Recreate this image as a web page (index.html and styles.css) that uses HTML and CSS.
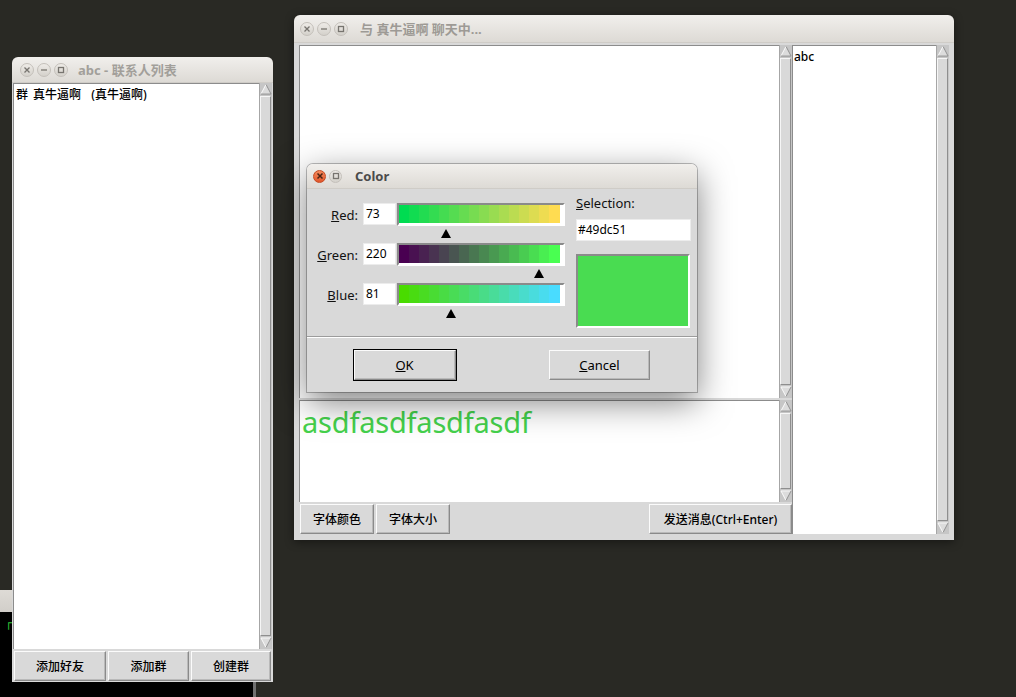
FILE: index.html
```html
<!DOCTYPE html>
<html lang="zh">
<head>
<meta charset="utf-8">
<title>chat</title>
<link rel="stylesheet" href="styles.css">
</head>
<body>
<div class="desktop">

  <div class="win terminal">
    <div class="term-title"></div>
    <div class="term-body">┌</div>
  </div>

  <div class="win contacts">
    <div class="titlebar">
      <div class="wbtns">
        <span class="wbtn"><svg viewBox="0 0 8 8"><path d="M1.5 1.5L6.5 6.5M6.5 1.5L1.5 6.5"/></svg></span>
        <span class="wbtn"><svg viewBox="0 0 8 8"><path d="M1 4H7"/></svg></span>
        <span class="wbtn"><svg viewBox="0 0 8 8"><rect x="1.5" y="1.5" width="5" height="5"/></svg></span>
      </div>
      <span class="wtitle">abc - 联系人列表</span>
    </div>
    <div class="wbody contacts-body">
      <div class="listrow">
        <div class="listbox">群 真牛逼啊  (真牛逼啊)</div>
        <div class="sb">
          <svg class="arr" viewBox="0 0 13 13"><polygon class="af" points="6.5,1.5 12,12 1,12"/><path class="al" d="M1 12L6.5 1.5"/><path class="ad" d="M6.5 1.5L12 12H1"/></svg>
          <div class="thumb"></div>
          <svg class="arr" viewBox="0 0 13 13"><polygon class="af" points="1,1 12,1 6.5,11.5"/><path class="al" d="M1 1H12M1 1L6.5 11.5"/><path class="ad" d="M12 1L6.5 11.5"/></svg>
        </div>
      </div>
      <div class="btnrow">
        <button class="tkbtn w92">添加好友</button>
        <button class="tkbtn w81">添加群</button>
        <button class="tkbtn grow">创建群</button>
      </div>
    </div>
  </div>

  <div class="win chat">
    <div class="titlebar">
      <div class="wbtns">
        <span class="wbtn"><svg viewBox="0 0 8 8"><path d="M1.5 1.5L6.5 6.5M6.5 1.5L1.5 6.5"/></svg></span>
        <span class="wbtn"><svg viewBox="0 0 8 8"><path d="M1 4H7"/></svg></span>
        <span class="wbtn"><svg viewBox="0 0 8 8"><rect x="1.5" y="1.5" width="5" height="5"/></svg></span>
      </div>
      <span class="wtitle">与 真牛逼啊 聊天中...</span>
    </div>
    <div class="wbody chat-body">
      <div class="chat-left">
        <div class="msgrow">
          <div class="textarea"></div>
          <div class="sb">
            <svg class="arr" viewBox="0 0 13 13"><polygon class="af" points="6.5,1.5 12,12 1,12"/><path class="al" d="M1 12L6.5 1.5"/><path class="ad" d="M6.5 1.5L12 12H1"/></svg>
            <div class="thumb"></div>
            <svg class="arr" viewBox="0 0 13 13"><polygon class="af" points="1,1 12,1 6.5,11.5"/><path class="al" d="M1 1H12M1 1L6.5 11.5"/><path class="ad" d="M12 1L6.5 11.5"/></svg>
          </div>
        </div>
        <div class="inputrow">
          <div class="textarea input">asdfasdfasdfasdf</div>
          <div class="sb">
            <svg class="arr" viewBox="0 0 13 13"><polygon class="af" points="6.5,1.5 12,12 1,12"/><path class="al" d="M1 12L6.5 1.5"/><path class="ad" d="M6.5 1.5L12 12H1"/></svg>
            <div class="thumb"></div>
            <svg class="arr" viewBox="0 0 13 13"><polygon class="af" points="1,1 12,1 6.5,11.5"/><path class="al" d="M1 1H12M1 1L6.5 11.5"/><path class="ad" d="M12 1L6.5 11.5"/></svg>
          </div>
        </div>
        <div class="chat-btns">
          <button class="tkbtn w74">字体颜色</button>
          <button class="tkbtn w74">字体大小</button>
          <button class="tkbtn send">发送消息(Ctrl+Enter)</button>
        </div>
      </div>
      <div class="chat-right">
        <div class="listbox">abc</div>
        <div class="sb">
          <svg class="arr" viewBox="0 0 13 13"><polygon class="af" points="6.5,1.5 12,12 1,12"/><path class="al" d="M1 12L6.5 1.5"/><path class="ad" d="M6.5 1.5L12 12H1"/></svg>
          <div class="thumb"></div>
          <svg class="arr" viewBox="0 0 13 13"><polygon class="af" points="1,1 12,1 6.5,11.5"/><path class="al" d="M1 1H12M1 1L6.5 11.5"/><path class="ad" d="M12 1L6.5 11.5"/></svg>
        </div>
      </div>
    </div>
  </div>

  <div class="win dialog">
    <div class="titlebar">
      <div class="wbtns">
        <span class="wbtn close"><svg viewBox="0 0 8 8"><path d="M1.5 1.5L6.5 6.5M6.5 1.5L1.5 6.5"/></svg></span>
        <span class="wbtn"><svg viewBox="0 0 8 8"><rect x="1.5" y="1.5" width="5" height="5"/></svg></span>
      </div>
      <span class="wtitle">Color</span>
    </div>
    <div class="wbody dlg-body">
      <div class="dlg-top">
        <div class="sliders">
          <div class="crow">
            <span class="clabel"><u>R</u>ed:</span>
            <div class="centry">73</div>
            <div class="cbarbox">
              <div class="cbar"><div class="grad g-red"></div></div>
              <div class="track"><span class="tri" style="margin-left:44px"></span></div>
            </div>
          </div>
          <div class="crow">
            <span class="clabel"><u>G</u>reen:</span>
            <div class="centry">220</div>
            <div class="cbarbox">
              <div class="cbar"><div class="grad g-green"></div></div>
              <div class="track"><span class="tri" style="margin-left:137px"></span></div>
            </div>
          </div>
          <div class="crow">
            <span class="clabel"><u>B</u>lue:</span>
            <div class="centry">81</div>
            <div class="cbarbox">
              <div class="cbar"><div class="grad g-blue"></div></div>
              <div class="track"><span class="tri" style="margin-left:49px"></span></div>
            </div>
          </div>
        </div>
        <div class="selcol">
          <span class="sellabel"><u>S</u>election:</span>
          <div class="centry selentry">#49dc51</div>
          <div class="swatch"></div>
        </div>
      </div>
      <div class="dlg-bottom">
        <div class="focusring"><button class="tkbtn okbtn"><u>O</u>K</button></div>
        <button class="tkbtn cancelbtn"><u>C</u>ancel</button>
      </div>
    </div>
  </div>

</div>
</body>
</html>
```

FILE: styles.css
```css
* { box-sizing: border-box; }
html, body { margin: 0; padding: 0; }
body {
  width: 1016px;
  height: 697px;
  overflow: hidden;
  background: #292924;
  font-family: "Noto Sans", "Noto Sans CJK SC", sans-serif;
  font-size: 12px;
  color: #000;
}
.desktop { position: relative; width: 1016px; height: 697px; }

.win { position: absolute; display: flex; flex-direction: column; }

/* background terminal */
.terminal { left: -20px; top: 590px; width: 276px; height: 107px; }
.term-title { height: 22px; background: linear-gradient(#dedbd6, #d1cec9); }
.term-body {
  flex: 1;
  background: #000;
  border-right: 3px solid #707070;
  padding: 5px 0 0 25px;
  color: #2fc238;
  font: bold 12px/1 "DejaVu Sans Mono", monospace;
}

/* title bars */
.titlebar {
  flex: none;
  display: flex;
  align-items: center;
  border-radius: 6px 6px 0 0;
  background: linear-gradient(#f1efec, #dddad5);
  border-bottom: 1px solid #cfccc7;
}
.wbtns { display: flex; gap: 3px; }
.wbtn {
  width: 14px;
  height: 14px;
  border-radius: 50%;
  background: linear-gradient(#eeebe7, #d4d1cb);
  border: 1px solid #c4c0ba;
  display: flex;
  align-items: center;
  justify-content: center;
}
.wbtn svg { width: 8px; height: 8px; fill: none; stroke: #77746f; stroke-width: 1.3; }
.wbtn.close {
  background: linear-gradient(#f58a5c, #e2562b);
  border-color: #c44a22;
}
.wbtn.close svg { stroke: #4a2413; stroke-width: 1.5; }
.wtitle {
  font-size: 13px;
  font-weight: bold;
  color: #a29f9a;
  white-space: pre;
}

.wbody { flex: 1; background: #d9d9d9; display: flex; min-height: 0; }

/* contacts window */
.contacts { left: 12px; top: 57px; width: 261px; height: 625px; }
.contacts .titlebar { height: 26px; padding-left: 8px; }
.contacts .wtitle { margin-left: 10px; }
.contacts-body { flex-direction: column; padding: 0 1px 1px 1px; gap: 2px; }
.listrow { flex: 1; display: flex; min-height: 0; }
.listbox {
  flex: 1;
  background: #fff;
  border-top: 1px solid #8c8c8c;
  border-left: 1px solid #8c8c8c;
  padding: 3px 2px 0 2px;
  line-height: 16px;
  font-weight: 500;
  word-spacing: 2px;
  white-space: pre;
}
.btnrow { flex: none; height: 30px; display: flex; gap: 2px; padding: 0 1px; }

/* tk buttons */
.tkbtn {
  font-family: "Noto Sans", "Noto Sans CJK SC", sans-serif;
  font-size: 12px;
  font-weight: 500;
  color: #000;
  background: #d9d9d9;
  border: 1px solid;
  border-color: #fbfbfb #8a8a8a #8a8a8a #fbfbfb;
  box-shadow: inset -1px -1px 0 #b9b9b9;
  padding: 0;
  margin: 0;
  height: 30px;
}
.w92 { width: 92px; }
.w81 { width: 81px; }
.w74 { width: 74px; }
.grow { flex: 1; }

/* scrollbars */
.sb {
  flex: none;
  width: 13px;
  background: #c6c6c6;
  border-left: 1px solid #a6a6a6;
  display: flex;
  flex-direction: column;
}
.arr { flex: none; width: 12px; height: 12px; display: block; }
.af { fill: #dcdcdc; }
.al { fill: none; stroke: #fdfdfd; stroke-width: 1; }
.ad { fill: none; stroke: #8d8d8d; stroke-width: 1; }
.thumb {
  flex: 1;
  margin: 1px 1px 1px 0;
  background: #d9d9d9;
  border: 1px solid;
  border-color: #f6f6f6 #8e8e8e #8e8e8e #f6f6f6;
}

/* chat window */
.chat {
  left: 294px; top: 15px; width: 660px; height: 525px;
  box-shadow: 0 2px 10px rgba(0,0,0,0.45);
  border-radius: 6px 6px 0 0;
}
.chat .titlebar { height: 28px; padding-left: 6px; }
.chat .wtitle { margin-left: 12px; color: #9d9a95; }
.chat-body { padding: 2px 5px 6px 5px; }
.chat-left { width: 493px; display: flex; flex-direction: column; gap: 2px; }
.msgrow { height: 353px; display: flex; }
.inputrow { height: 102px; display: flex; }
.textarea {
  flex: 1;
  background: #fff;
  border-top: 1px solid #8c8c8c;
  border-left: 1px solid #8c8c8c;
}
.textarea.input {
  color: #45d24c;
  font-size: 29px;
  line-height: 36px;
  padding: 3px 0 0 2px;
  letter-spacing: -0.2px;
}
.chat-btns { height: 30px; display: flex; gap: 2px; padding-left: 1px; }
.send { width: 143px; margin-left: auto; }
.chat-right { flex: 1; display: flex; height: 489px; }
.chat-right .listbox { padding: 3px 1px 0 1px; }

/* color dialog */
.dialog {
  left: 307px; top: 164px; width: 390px; height: 228px;
  box-shadow: 0 10px 34px rgba(0,0,0,0.5), 0 0 0 1px rgba(0,0,0,0.25);
  border-radius: 6px 6px 0 0;
}
.dialog .titlebar { height: 25px; padding-left: 6px; }
.dialog .wbtns { gap: 3px; }
.dialog .wtitle { margin-left: 13px; color: #4b4b4b; }
.dialog .wbtn { width: 13px; height: 13px; }
.dlg-body { flex-direction: column; }
.dlg-top {
  height: 148px;
  display: flex;
  border-bottom: 1px solid #9c9c9c;
}
.sliders { padding-top: 14px; display: flex; flex-direction: column; }
.crow { height: 40px; display: flex; align-items: flex-start; }
.clabel {
  width: 51px;
  text-align: right;
  font-size: 13px;
  line-height: 18px;
  padding-top: 3px;
  color: #111;
}
.centry {
  width: 33px;
  height: 22px;
  margin-left: 5px;
  background: #fff;
  border: 1px solid #ececec;
  padding-left: 2px;
  font-size: 12px;
  line-height: 19px;
}
.cbarbox { width: 168px; margin-left: 1px; }
.cbar {
  height: 23px;
  border: 2px solid;
  border-color: #8a8a8a #fff #fff #8a8a8a;
  background: #fff;
  padding: 0 3px 1px 0;
}
.grad { height: 100%; }
.g-red {
  background: linear-gradient(to right,
    rgb(0,220,81) 0 10px, rgb(17,220,81) 10px 20px, rgb(34,220,81) 20px 30px, rgb(51,220,81) 30px 40px,
    rgb(68,220,81) 40px 50px, rgb(85,220,81) 50px 60px, rgb(102,220,81) 60px 70px, rgb(119,220,81) 70px 80px,
    rgb(136,220,81) 80px 90px, rgb(153,220,81) 90px 100px, rgb(170,220,81) 100px 110px, rgb(187,220,81) 110px 120px,
    rgb(204,220,81) 120px 130px, rgb(221,220,81) 130px 140px, rgb(238,220,81) 140px 150px, rgb(255,220,81) 150px);
}
.g-green {
  background: linear-gradient(to right,
    rgb(73,0,81) 0 10px, rgb(73,17,81) 10px 20px, rgb(73,34,81) 20px 30px, rgb(73,51,81) 30px 40px,
    rgb(73,68,81) 40px 50px, rgb(73,85,81) 50px 60px, rgb(73,102,81) 60px 70px, rgb(73,119,81) 70px 80px,
    rgb(73,136,81) 80px 90px, rgb(73,153,81) 90px 100px, rgb(73,170,81) 100px 110px, rgb(73,187,81) 110px 120px,
    rgb(73,204,81) 120px 130px, rgb(73,221,81) 130px 140px, rgb(73,238,81) 140px 150px, rgb(73,255,81) 150px);
}
.g-blue {
  background: linear-gradient(to right,
    rgb(73,220,0) 0 10px, rgb(73,220,17) 10px 20px, rgb(73,220,34) 20px 30px, rgb(73,220,51) 30px 40px,
    rgb(73,220,68) 40px 50px, rgb(73,220,85) 50px 60px, rgb(73,220,102) 60px 70px, rgb(73,220,119) 70px 80px,
    rgb(73,220,136) 80px 90px, rgb(73,220,153) 90px 100px, rgb(73,220,170) 100px 110px, rgb(73,220,187) 110px 120px,
    rgb(73,220,204) 120px 130px, rgb(73,220,221) 130px 140px, rgb(73,220,238) 140px 150px, rgb(73,220,255) 150px);
}
.track { display: flex; padding-top: 3px; }
.tri {
  width: 0;
  height: 0;
  border-left: 5px solid transparent;
  border-right: 5px solid transparent;
  border-bottom: 9px solid #000;
}
.selcol {
  margin-left: 11px;
  width: 115px;
  padding-top: 5px;
  display: flex;
  flex-direction: column;
}
.sellabel { font-size: 13px; line-height: 18px; color: #111; }
.selentry { width: 115px; margin: 7px 0 0 0; padding-left: 1px; }
.swatch {
  margin-top: 13px;
  width: 114px;
  height: 74px;
  border: 2px solid;
  border-color: #8a8a8a #fff #fff #8a8a8a;
  background: #49dc51;
}
.dlg-bottom {
  flex: 1;
  border-top: 1px solid #fff;
  display: grid;
  grid-template-columns: 1fr 1fr;
  justify-items: center;
  align-items: start;
  padding-top: 11px;
}
.focusring { border: 1px solid #000; width: 104px; height: 32px; }
.okbtn { width: 102px; height: 30px; font-size: 13px; font-weight: 400; }
.cancelbtn { width: 101px; height: 30px; margin-top: 1px; font-size: 13px; font-weight: 400; }
```
